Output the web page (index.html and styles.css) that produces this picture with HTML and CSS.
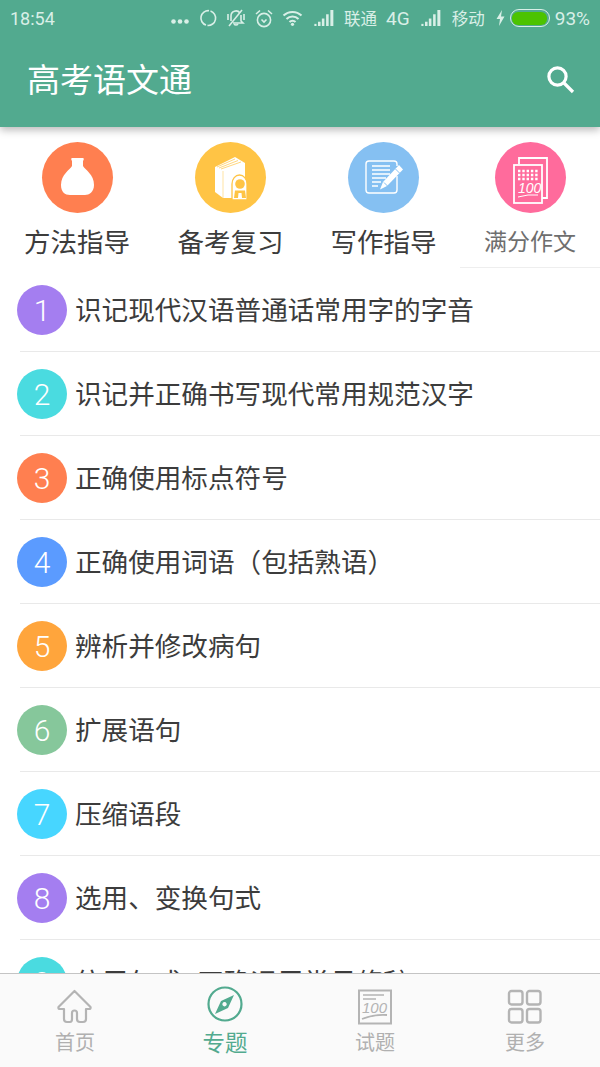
FILE: index.html
```html
<!DOCTYPE html>
<html>
<head>
    <title>高考语文通</title>
    <meta charset="UTF-8">
    <meta name="viewport" content="width=device-width, initial-scale=1.0">
    <link rel="stylesheet" href="styles.css">
</head>
<body>
    <div class="app">
        <div class="top-bar">
            <div class="status-bar">
                <span class="status-time">18:54</span>
                <div class="status-right">
                    <svg class="st-dots" width="18" height="5" viewBox="0 0 18 5"><circle cx="2.5" cy="2.5" r="2.3"/><circle cx="9" cy="2.5" r="2.3"/><circle cx="15.5" cy="2.5" r="2.3"/></svg>
                    <svg class="st-icon st-sync" width="18" height="18" viewBox="0 0 18 18"><path d="M10 1.7 A7.4 7.4 0 0 0 7 16.1"/><path d="M8.5 16.4 A7.4 7.4 0 0 0 11.5 2"/></svg>
                    <svg class="st-icon st-mute" width="19" height="20" viewBox="0 0 19 20"><path d="M4 13 V8 A5 5 0 0 1 13 5"/><path d="M14 7 V13 L16 15 H6"/><path d="M7 16 A2.5 2.5 0 0 0 11 16" class="st-fill"/><path d="M2 18 L15 2"/><path d="M1 6 V12 M17 6 V12"/></svg>
                    <svg class="st-icon st-alarm" width="18" height="19" viewBox="0 0 18 19"><circle cx="9" cy="11" r="6.6"/><path d="M6.5 10.5 L9 13 L11.5 10.5"/><path d="M1 5 L5 1.5 M17 5 L13 1.5"/></svg>
                    <svg class="st-wifi" width="21" height="16" viewBox="0 0 20 16"><path class="st-wave" d="M1 5.5 A13 13 0 0 1 19 5.5"/><path class="st-wave" d="M4 9 A8.5 8.5 0 0 1 16 9"/><path class="st-wave" d="M7 12 A4 4 0 0 1 13 12"/><circle cx="10" cy="14.3" r="1.6"/></svg>
                    <svg class="st-signal" width="21" height="16" viewBox="0 0 19 15"><rect x="0" y="13" width="2" height="2"/><rect x="3.4" y="11" width="2.4" height="4"/><rect x="7" y="8" width="2.4" height="7"/><rect x="11" y="4" width="2.4" height="11"/><rect x="15" y="0" width="2.8" height="15"/></svg>
                    <span class="st-text st-carrier">联通</span>
                    <span class="st-text st-net">4G</span>
                    <svg class="st-signal" width="21" height="16" viewBox="0 0 19 15"><rect x="0" y="13" width="2" height="2"/><rect x="3.4" y="11" width="2.4" height="4"/><rect x="7" y="8" width="2.4" height="7"/><rect x="11" y="4" width="2.4" height="11"/><rect x="15" y="0" width="2.8" height="15"/></svg>
                    <span class="st-text st-carrier2">移动</span>
                    <svg class="st-bolt" width="9" height="16" viewBox="0 0 9 16"><path d="M6 0 L0.5 9 H4 L3 16 L8.5 6.5 H5 Z"/></svg>
                    <div class="battery"><div class="battery-level"></div></div>
                    <span class="st-text st-percent">93%</span>
                </div>
            </div>
            <div class="toolbar">
                <h1 class="toolbar-title">高考语文通</h1>
                <svg class="search-icon" width="30" height="30" viewBox="0 0 30 30"><circle cx="12.5" cy="12.5" r="8.6"/><path d="M19 19 L28 28"/></svg>
            </div>
        </div>

        <div class="category-row">
            <div class="category">
                <div class="category-icon bg-orange">
                    <svg width="71" height="71" viewBox="0 0 71 71"><path fill="#fff" d="M30 16 H41 C42 16 42 18 41 19 V24 C43 28 52 32 52 43 C52 50 47 53 43 53 H28 C23 53 19 50 19 43 C19 32 28 28 30 24 V19 C29 18 29 16 30 16 Z"/></svg>
                </div>
                <div class="category-name">方法指导</div>
            </div>
            <div class="category">
                <div class="category-icon bg-yellow">
                    <svg width="71" height="71" viewBox="0 0 71 71">
                        <path fill="#fff" d="M20 25 L40 15 L50 21 V36 L40 56 H28 L20 50 Z"/>
                        <path d="M22 25 L40 17 M24 26 L43 18.5 M26 27 L46 20" stroke="#ffc445" stroke-width="0.7" fill="none"/>
                        <path d="M28 29 V56" stroke="#ffc445" stroke-width="0.5" fill="none"/>
                        <path fill="#fff" stroke="#ffc445" stroke-width="1.3" d="M37 58 V42 A7.5 9 0 0 1 52 42 V58 Z"/>
                        <circle cx="45" cy="42" r="4.8" fill="#ffc445"/>
                        <path fill="#ffc445" d="M40 48.5 H50 L51 56 H47 L46.5 51 H43.5 L43 56 H39 Z"/>
                    </svg>
                </div>
                <div class="category-name">备考复习</div>
            </div>
            <div class="category">
                <div class="category-icon bg-blue">
                    <svg width="71" height="71" viewBox="0 0 71 71" fill="none" stroke="#fff" stroke-width="1.4">
                        <path d="M49 34 V48 Q49 51 46 51 H21 Q18 51 18 48 V22 Q18 19 21 19 H46 Q49 19 49 22 V24"/>
                        <path stroke-width="1.3" d="M24 24 H42 M24 28 H42 M24 32 H42 M24 36 H38 M24 40 H33 M24 44 H30"/>
                        <path fill="#fff" stroke="none" d="M51 23 L55 27.5 L39 44 L32 47.5 L35 40 Z"/>
                        <path stroke="#85c0f2" stroke-width="1" d="M36 40.5 L39.5 44 M47.5 27 L51.5 31"/>
                    </svg>
                </div>
                <div class="category-name">写作指导</div>
            </div>
            <div class="category category-active">
                <div class="category-icon bg-pink">
                    <svg width="71" height="71" viewBox="0 0 71 71" fill="none" stroke="#fff" stroke-width="1.8">
                        <path d="M24 22 V16 H52 V56 H47"/>
                        <rect x="19" y="23" width="28" height="38"/>
                        <path stroke-width="2.4" stroke-dasharray="2.4 1.9" d="M23 29 H43 M23 33 H43 M23 37 H43"/>
                        <text class="pink-score" x="23" y="51">100</text>
                        <path stroke-width="1" d="M23 55 Q33 52 43 53"/>
                    </svg>
                </div>
                <div class="category-name">满分作文</div>
            </div>
        </div>

        <div class="topic-list">
            <div class="topic"><span class="topic-num bg-purple">1</span><span class="topic-text">识记现代汉语普通话常用字的字音</span></div>
            <div class="topic"><span class="topic-num bg-cyan">2</span><span class="topic-text">识记并正确书写现代常用规范汉字</span></div>
            <div class="topic"><span class="topic-num bg-orange">3</span><span class="topic-text">正确使用标点符号</span></div>
            <div class="topic"><span class="topic-num bg-royal">4</span><span class="topic-text">正确使用词语（包括熟语）</span></div>
            <div class="topic"><span class="topic-num bg-amber">5</span><span class="topic-text">辨析并修改病句</span></div>
            <div class="topic"><span class="topic-num bg-sage">6</span><span class="topic-text">扩展语句</span></div>
            <div class="topic"><span class="topic-num bg-sky">7</span><span class="topic-text">压缩语段</span></div>
            <div class="topic"><span class="topic-num bg-purple">8</span><span class="topic-text">选用、变换句式</span></div>
            <div class="topic"><span class="topic-num bg-cyan">9</span><span class="topic-text topic-text-spaced">仿用句式, 正确运用常见修辞</span></div>
        </div>

        <div class="tab-bar">
            <div class="tab">
                <svg width="36" height="36" viewBox="0 0 36 36" fill="none" stroke="#b4b4b4" stroke-width="2.2" stroke-linejoin="round"><path d="M17.5 2 L1.5 18 Q1 20 3 20 H7 V30 Q7 33 10 33 H13 Q15 33 15 30 V24 Q15 21.5 17.5 21.5 Q20 21.5 20 24 V30 Q20 33 23 33 H26 Q29 33 29 30 V20 H32 Q34 20 33.5 18 Z"/></svg>
                <span class="tab-label">首页</span>
            </div>
            <div class="tab tab-active">
                <svg width="36" height="36" viewBox="0 0 36 36"><circle cx="18" cy="18" r="16.5" fill="none" stroke="#52aa8f" stroke-width="2.2"/><path fill="#52aa8f" fill-rule="evenodd" d="M27 9 L21 22 L8 28 L14 15 Z M17.5 16 A2.2 2.2 0 1 0 17.6 16 Z"/></svg>
                <span class="tab-label">专题</span>
            </div>
            <div class="tab">
                <svg width="36" height="36" viewBox="0 0 36 36" fill="none" stroke="#b4b4b4"><rect x="2" y="1.5" width="32" height="33" stroke-width="2"/><path stroke-width="1.5" d="M6 6 H27 M6 10 H19"/><text class="tab-score" x="5" y="24">100</text><path stroke-width="1.8" d="M5 30 Q18 25 30 26"/></svg>
                <span class="tab-label">试题</span>
            </div>
            <div class="tab">
                <svg width="36" height="36" viewBox="0 0 36 36" fill="none" stroke="#b4b4b4" stroke-width="2.4"><rect x="2" y="2" width="13.5" height="13.5" rx="2.5"/><rect x="20" y="2" width="13.5" height="13.5" rx="2.5"/><rect x="2" y="20" width="13.5" height="13.5" rx="2.5"/><rect x="20" y="20" width="13.5" height="13.5" rx="2.5"/></svg>
                <span class="tab-label">更多</span>
            </div>
        </div>
    </div>
</body>
</html>
```

FILE: styles.css
```css
* {
    box-sizing: border-box;
}

body {
    font-family: "Roboto", "Noto Sans CJK SC", sans-serif;
    margin: 0;
    padding: 0;
    background-color: #fff;
}

.app {
    width: 600px;
    height: 1067px;
    display: flex;
    flex-direction: column;
    overflow: hidden;
}

.top-bar {
    flex: none;
    height: 127px;
    background-color: #52aa8f;
    box-shadow: 0 3px 8px rgba(0, 0, 0, 0.28);
    position: relative;
    z-index: 1;
}

.status-bar {
    height: 36px;
    display: flex;
    align-items: center;
    justify-content: space-between;
    padding: 0 10px;
    color: #d9efe7;
}

.status-time {
    font-size: 18px;
}

.status-right {
    display: flex;
    align-items: center;
}

.st-dots,
.st-wifi circle,
.st-signal,
.st-bolt {
    fill: #d9efe7;
}

.st-dots {
    margin-top: 6px;
    margin-right: 10px;
}

.st-icon,
.st-wave {
    fill: none;
    stroke: #d9efe7;
    stroke-width: 1.6;
}

.st-sync {
    margin-right: 10px;
}

.st-mute,
.st-alarm {
    margin-right: 9px;
}

.st-wifi {
    margin-right: 11px;
}

.st-wave {
    stroke-width: 2;
}

.st-text {
    font-size: 16.5px;
}

.st-carrier {
    margin-left: 9px;
    margin-right: 9px;
}

.st-net {
    font-size: 19px;
    margin-right: 11px;
}

.st-carrier2 {
    margin-left: 10px;
    margin-right: 11px;
}

.st-bolt {
    margin-right: 5px;
}

.battery {
    width: 40px;
    height: 18px;
    border: 1.5px solid #d9efe7;
    border-radius: 9px;
    padding: 1.5px;
    margin-right: 5px;
}

.battery-level {
    width: 100%;
    height: 100%;
    background-color: #4cc300;
    border-radius: 6px;
}

.st-percent {
    font-size: 19px;
}

.toolbar {
    height: 91px;
    display: flex;
    align-items: center;
    justify-content: space-between;
    padding: 0 25px 6px 27px;
}

.toolbar-title {
    margin: 0 0 2px;
    font-size: 33px;
    font-weight: 400;
    color: #fff;
}

.search-icon {
    fill: none;
    stroke: #fff;
    stroke-width: 3.2;
}

.category-row {
    flex: none;
    height: 141px;
    display: grid;
    grid-template-columns: 154px 153px 153px 140px;
}

.category {
    display: flex;
    flex-direction: column;
    align-items: center;
    padding-top: 15px;
}

.category-icon {
    width: 71px;
    height: 71px;
    border-radius: 50%;
}

.category-icon svg {
    display: block;
}

.category-name {
    margin-top: 11px;
    font-size: 26.5px;
    line-height: 38px;
    color: #3c3c3c;
}

.category-active {
    border-bottom: 1px solid #eee;
}

.category-active .category-name {
    font-size: 23px;
    color: #6e6e6e;
}

.pink-score {
    font-family: "Liberation Sans", sans-serif;
    font-size: 14px;
    font-style: italic;
    fill: #fff;
    stroke: none;
}

.tab-score {
    font-family: "Liberation Sans", sans-serif;
    font-size: 15px;
    font-style: italic;
    fill: #b4b4b4;
    stroke: none;
}

.bg-orange { background-color: #ff7f50; }
.bg-yellow { background-color: #ffc445; }
.bg-blue { background-color: #85c0f2; }
.bg-pink { background-color: #ff6b9c; }
.bg-purple { background-color: #a47ef0; }
.bg-cyan { background-color: #4adbe0; }
.bg-royal { background-color: #5b9bff; }
.bg-amber { background-color: #ffa53c; }
.bg-sage { background-color: #86c79b; }
.bg-sky { background-color: #47d6ff; }

.topic-list {
    flex: 1;
    min-height: 0;
    overflow: hidden;
}

.topic {
    height: 84px;
    display: flex;
    align-items: center;
    padding-left: 17px;
    position: relative;
}

.topic::after {
    content: "";
    position: absolute;
    left: 20px;
    right: 0;
    bottom: 0;
    height: 1px;
    background-color: #e9e9e9;
}

.topic-num {
    flex: none;
    width: 50px;
    height: 50px;
    border-radius: 50%;
    color: #fff;
    font-size: 30px;
    font-weight: 300;
    line-height: 52px;
    text-align: center;
}

.topic-text {
    margin-left: 8px;
    margin-bottom: 4px;
    font-size: 26.6px;
    color: #3c3c3c;
    white-space: nowrap;
}

.topic-text-spaced {
    word-spacing: 4px;
}

.tab-bar {
    flex: none;
    height: 94px;
    display: grid;
    grid-template-columns: repeat(4, 1fr);
    background-color: #fafafa;
    border-top: 1px solid #c4c4c4;
    position: relative;
    z-index: 1;
}

.tab {
    display: flex;
    flex-direction: column;
    align-items: center;
    padding-top: 15px;
    color: #b0b0b0;
}

.tab svg {
    display: block;
}

.tab-label {
    margin-top: 3px;
    font-size: 20px;
    line-height: 30px;
}

.tab-active {
    color: #52aa8f;
}

.tab-active svg {
    margin-top: -3px;
    margin-bottom: 3px;
}

.tab-active .tab-label {
    font-size: 22.5px;
}
```
